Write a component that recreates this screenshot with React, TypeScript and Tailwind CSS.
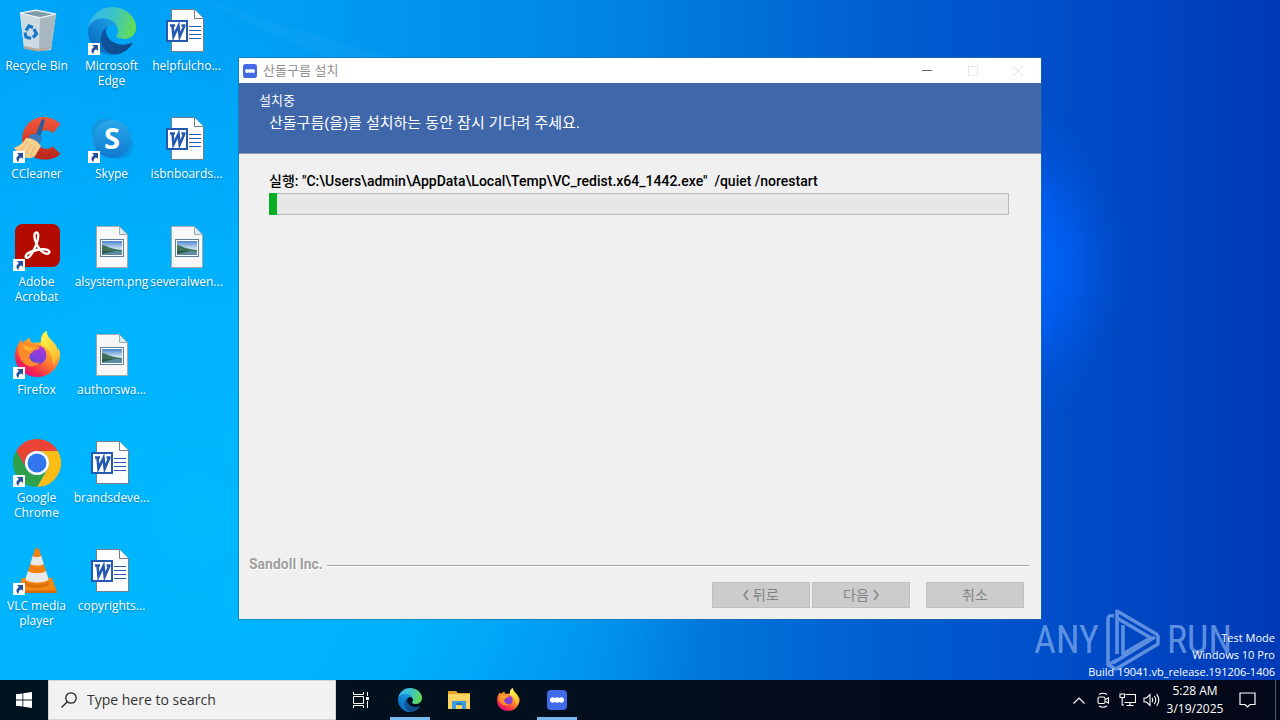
import type { ReactNode } from "react";

function EdgeIcon({ className }: { className: string }) {
  return (
    <svg viewBox="0 0 256 256" className={className}>
      <defs>
        <linearGradient id="edge-navy" x1="0.2" y1="0" x2="0.9" y2="0.8">
          <stop offset="0" stopColor="#0c59a4" />
          <stop offset="1" stopColor="#114a8b" />
        </linearGradient>
        <linearGradient id="edge-blue" x1="0.9" y1="0.2" x2="0.2" y2="1">
          <stop offset="0" stopColor="#1b9de2" />
          <stop offset="0.5" stopColor="#1383d2" />
          <stop offset="1" stopColor="#0666c0" />
        </linearGradient>
        <linearGradient id="edge-green" x1="0" y1="0.3" x2="1" y2="0.5">
          <stop offset="0" stopColor="#35b6ee" />
          <stop offset="0.5" stopColor="#3ac3c8" />
          <stop offset="1" stopColor="#66dc50" />
        </linearGradient>
      </defs>
      <path
        fill="url(#edge-navy)"
        d="M231 190.5c-3.4 1.8-6.9 3.4-10.5 4.7a101.5 101.5 0 0 1-35.9 6.4c-47.3 0-88.5-32.5-88.5-74.3a31.5 31.5 0 0 1 16.4-27.3c-42.8 1.8-53.8 46.4-53.8 72.5 0 73.9 68 81.3 82.7 81.3 7.9 0 19.8-2.3 27-4.6l1.3-.4a128.3 128.3 0 0 0 66.6-52.8 4 4 0 0 0-5.3-5.6z"
      />
      <path
        fill="url(#edge-blue)"
        d="M105.7 241.4a79.2 79.2 0 0 1-22.7-21.3 80.7 80.7 0 0 1 29.5-120c3.2-1.5 8.5-4.1 15.6-4a32.4 32.4 0 0 1 25.7 13 31.9 31.9 0 0 1 6.3 18.7c0-.2 24.5-79.6-80-79.6-43.9 0-80 41.6-80 78.2a130.2 130.2 0 0 0 12.1 56 128 128 0 0 0 156.4 67 75.5 75.5 0 0 1-62.8-8z"
      />
      <path
        fill="url(#edge-green)"
        d="M152.3 148.9c-.8 1-3.3 2.5-3.3 5.7 0 2.6 1.7 5.1 4.7 7.2 14.4 10 41.5 8.7 41.6 8.7 10.7 0 21.1-2.9 30.3-8.3A61.4 61.4 0 0 0 256 109.2c.3-22.4-8-37.3-11.3-43.9C223.5 23.9 177.7 0 128 0A128 128 0 0 0 0 126.2c.5-36.5 36.8-66 80-66 3.5 0 23.5.3 42 10.1 16.3 8.6 24.9 18.9 30.8 29.2 6.2 10.7 7.3 24.1 7.3 29.5s-2.7 13.3-7.8 19.9z"
      />
    </svg>
  );
}

function FirefoxIcon({ className }: { className: string }) {
  return (
    <svg viewBox="0 0 48 48" className={className}>
      <defs>
        <linearGradient id="fx-body" x1="0.85" y1="0.1" x2="0.25" y2="0.95">
          <stop offset="0" stopColor="#fff44f" />
          <stop offset="0.3" stopColor="#ffb32b" />
          <stop offset="0.6" stopColor="#ff6a33" />
          <stop offset="0.85" stopColor="#f5234f" />
          <stop offset="1" stopColor="#e01482" />
        </linearGradient>
        <linearGradient id="fx-globe" x1="0.7" y1="0" x2="0.3" y2="1">
          <stop offset="0" stopColor="#b433d8" />
          <stop offset="1" stopColor="#5b48d8" />
        </linearGradient>
        <linearGradient id="fx-flame" x1="0.5" y1="0" x2="0.8" y2="1">
          <stop offset="0" stopColor="#fff44f" />
          <stop offset="1" stopColor="#ffb52a" />
        </linearGradient>
      </defs>
      <path
        fill="url(#fx-body)"
        d="M6 12c.3-1.500 1.500-3 2.300-3.500 0 1.500.4 2.800 1.200 3.500C12 9 15 8.500 17 6.500c-.3 3 .8 4.800 3 5.500l8-1c-.5-5 1-8.500 5.500-11 .3 5.500 4 8 7 11.500 3 3 4 5.500 4.300 8.500.4-1 .5-2 .2-3.200C47 20 48 24 46 30c-3 10-12 16-21.500 16C12 46 2 37 2 25c0-5 1-9 4-13z"
      />
      <path fill="url(#fx-flame)" d="M28 14c-.5-6 1-11 5.500-14 .3 5.500 4 8 7 11.500 5 6 5 16 0 22-1-10-4-16-12.500-19.500z" />
      <circle cx="24" cy="24" r="9.500" fill="url(#fx-globe)" />
      <path
        fill="#ff8a2b"
        d="M6 12c4-1 8-.5 11 2 3-1 7 0 9 1.500 1.500 1.500 0 3-2 3.200-3 .3-4 1.200-4.500 3-2.500.5-4 3-2.500 6 1.500 3.500 6 5 10 3.500-4 6-14 5-18-1-4-6-5-13-3-18.200z"
      />
      <path fill="#ffc02c" d="M9.500 14c3 0 5 1 7 2.500 3-1 5-.5 7 0-3 .5-5.500 1.500-6 4-3 .5-6-2-8-6.500z" opacity="0.75" />
    </svg>
  );
}

function RecycleBinIcon() {
  return (
    <svg viewBox="0 0 48 48" className="size-12">
      <path fill="#cfdfe6" d="M7 6 23 3 43 7 38 43 26 44 11 41z" />
      <path fill="#a9bfc9" d="M7 6 23 3 43 7 27 11z" />
      <path fill="#7f9aa8" d="M10 6.500 23 4.500 39 7.300 27 9.800z" />
      <path fill="#cddbe2" d="M7 6 27 11 26 44 11 41z" />
      <path fill="#a8b8c1" d="M27 11 43 7 38 41 26 44z" />
      <path fill="#b5a79c" d="M11 39 26 42 38 39.500 37.500 42 26 44.500 11.500 42z" />
      <path fill="none" stroke="#f4f8fa" strokeWidth="1.200" d="M7 6 23 3 43 7 27 11z" />
      <g fill="none" stroke="#1678c8" strokeWidth="3.200">
        <path d="M13 23.500 16 19l4 1.500" />
        <path d="m21 22 2.500 5-3.500 3.500" />
        <path d="M18 31.500 13 30l-1-4.500" />
      </g>
    </svg>
  );
}

function CCleanerIcon() {
  return (
    <svg viewBox="0 0 48 48" className="size-12">
      <defs>
        <linearGradient id="cc-red" x1="0" y1="0" x2="0" y2="1">
          <stop offset="0" stopColor="#f2583a" />
          <stop offset="1" stopColor="#b8261c" />
        </linearGradient>
      </defs>
      <path
        fill="url(#cc-red)"
        d="M47.500 9 40 18c-3-3-8-4-12-1-5 3.500-6 9-2 13.500 4 4.500 10 4 14 1l7.500 7.500c-6 6-16 7-25 4C13 39 7 30 9.500 19.500 12 8 22 1 32 2c6 .3 11 3 15.500 7z"
      />
      <path fill="#225f9e" d="m29 4 3 1-6 21-5-2z" />
      <path fill="#3b78b5" d="M17 20c4-2 9-1 12 3l-3 8-12-5z" />
      <path fill="#f8cf8c" d="M13 23c6 0 12 3 15 8l-6 10c-2 2-7 3-10 1-6-1-8-6-11-9 5-2 9-5 12-10z" />
      <path fill="none" stroke="#e6b674" strokeWidth="1" d="M14 27 7 37m11-8-6 12m10-10-5 11" />
    </svg>
  );
}

function SkypeIcon() {
  return (
    <svg viewBox="0 0 48 48" className="size-12">
      <defs>
        <linearGradient id="skype" x1="0" y1="0" x2="0" y2="1">
          <stop offset="0" stopColor="#28a8ea" />
          <stop offset="1" stopColor="#0f79d0" />
        </linearGradient>
      </defs>
      <circle cx="17" cy="17" r="13.500" fill="#1596e0" />
      <circle cx="32" cy="31" r="13" fill="#0a94e6" />
      <circle cx="24" cy="24" r="19" fill="url(#skype)" />
      <text x="24" y="34" textAnchor="middle" fontSize="29" fontWeight="700" fill="#fff" fontFamily="Open Sans, sans-serif">
        S
      </text>
    </svg>
  );
}

function AcrobatIcon() {
  return (
    <svg viewBox="0 0 48 48" className="size-12">
      <rect x="2" y="1" width="45" height="43" rx="7.500" fill="#b30b00" />
      <path
        fill="none"
        stroke="#fff"
        strokeWidth="2.400"
        strokeLinejoin="round"
        d="M23.500 9.500c-3 0-2.500 6 0 11.500C21 27 17 34.500 14.500 34.800c-3.500.2-2-4.300 4-6.300 6-2 13-3 16.500-1.300 3.500 2 0 5.300-5 2C26.500 27 25 24 23.500 21c2-5.500 2.500-11.500 0-11.500z"
      />
    </svg>
  );
}

function ChromeIcon() {
  return (
    <svg viewBox="0 0 48 48" className="size-12">
      <path fill="#ea4335" d="M3.200 12a24 24 0 0 1 41.600 0H24a12 12 0 0 0-10.400 18z" />
      <path fill="#fbbc16" d="M44.800 12A24 24 0 0 1 24 48l10.400-18A12 12 0 0 0 24 12z" />
      <path fill="#2da14c" d="M24 48A24 24 0 0 1 3.200 12l10.400 18a12 12 0 0 0 20.800 0z" />
      <circle cx="24" cy="24" r="12" fill="#fff" />
      <circle cx="24" cy="24" r="9.500" fill="#3377ee" />
    </svg>
  );
}

function VlcIcon() {
  return (
    <svg viewBox="0 0 48 48" className="size-12">
      <path fill="#f28a12" d="M9 31h30l5 14H4z" />
      <path fill="#d9690a" d="M4 43.500h40V46H4z" />
      <path fill="#c85f0a" d="M13 32c0 5 22 5 22 0l1.500 5c-2 5-23 5-25 0z" opacity="0.6" />
      <path fill="#f4810f" d="M22 2c.8-1.300 3.200-1.300 4 0l10 32c-2 5-22 5-24 0z" />
      <path fill="#e8e8e8" d="m19.800 9-2.600 8c3 2 10.500 2 13.600 0l-2.600-8c-2 1.500-6.400 1.500-8.400 0z" />
      <path fill="#e8e8e8" d="m15 24-2.700 8.500c3.500 4 20 4 23.400 0L33 24c-4 3-14 3-18 0z" />
    </svg>
  );
}

function WordIcon() {
  return (
    <svg viewBox="0 0 48 48" className="size-12">
      <path fill="#fdfdfd" stroke="#6f7f8c" strokeWidth="1" d="M8.500 2.500h23l9 9v33h-32z" />
      <path fill="#fff" stroke="#6f7f8c" strokeWidth="1" d="M31.500 2.500v9h9" />
      <path stroke="#2b5fb4" strokeWidth="1" d="M26 19.500h12M26 23.500h12M26 27.500h12M26 31.500h12" />
      <rect x="4" y="14" width="20" height="20" fill="#fff" stroke="#2459b2" strokeWidth="2" />
      <path fill="none" stroke="#2459b2" strokeWidth="2.600" d="M7 18.500h5M9.500 18.500l1 11 5-10.500 1.200 10.500 4.800-11M18.500 18.500h4" />
    </svg>
  );
}

function ImageFileIcon() {
  return (
    <svg viewBox="0 0 48 48" className="size-12">
      <defs>
        <linearGradient id="photo-sky" x1="0" y1="0" x2="0" y2="1">
          <stop offset="0" stopColor="#4d86cf" />
          <stop offset="1" stopColor="#e3f0f6" />
        </linearGradient>
      </defs>
      <path fill="#f7f7f7" stroke="#9fa9b0" strokeWidth="1" d="M8.500 3.500h23l8 8v33h-31z" />
      <path fill="#d5ecf8" stroke="#9fa9b0" strokeWidth="1" d="M31.500 3.500v8h8z" />
      <rect x="12.500" y="16.500" width="23" height="17" fill="#fff" stroke="#5f7f9c" />
      <path fill="url(#photo-sky)" d="M14 18h20v9H14z" />
      <path fill="#3f7158" d="M14 22c4 0 7 4 20 5v1H14z" />
      <path fill="#5d8ba0" d="M14 28h20v4H14z" />
      <path fill="#2f5749" d="M14 28h13l-13 3z" />
    </svg>
  );
}

function SandollIcon({ className }: { className: string }) {
  return (
    <svg viewBox="0 0 20 20" className={className}>
      <rect width="20" height="20" rx="4" fill="#4169e8" />
      <g fill="#fff">
        <circle cx="5.700" cy="10" r="2.700" />
        <circle cx="10" cy="10" r="2.700" />
        <circle cx="14.300" cy="10" r="2.700" />
      </g>
    </svg>
  );
}

function ExplorerIcon() {
  return (
    <svg viewBox="0 0 24 24" className="size-6">
      <path fill="#e5a02c" d="M1 3h8l2 2h12v4H1z" />
      <path fill="#fcd462" d="M1 6h22v15H1z" />
      <path fill="#3c9bdc" d="M5 13h14v8h-4v-4H9v4H5z" />
      <path fill="#2478b8" d="M9 15h6v2H9z" />
    </svg>
  );
}

function ShortcutArrow() {
  return (
    <svg viewBox="0 0 12 12" className="absolute bottom-0 left-0 size-3">
      <path fill="#fff" d="M0 0h12v12H0z" />
      <path fill="#25509a" d="M4 2h6v6L8 6.200C6 7.500 5.500 8.500 5.500 11 2.500 9 3 6 6 4z" />
    </svg>
  );
}

type DesktopItem = { label: string; icon: ReactNode; shortcut?: boolean };

// filled column by column, six rows per column
const items: DesktopItem[] = [
  { label: "Recycle Bin", icon: <RecycleBinIcon /> },
  { label: "CCleaner", icon: <CCleanerIcon />, shortcut: true },
  { label: "Adobe Acrobat", icon: <AcrobatIcon />, shortcut: true },
  { label: "Firefox", icon: <FirefoxIcon className="size-12" />, shortcut: true },
  { label: "Google Chrome", icon: <ChromeIcon />, shortcut: true },
  { label: "VLC media player", icon: <VlcIcon />, shortcut: true },
  { label: "Microsoft Edge", icon: <EdgeIcon className="size-12" />, shortcut: true },
  { label: "Skype", icon: <SkypeIcon />, shortcut: true },
  { label: "alsystem.png", icon: <ImageFileIcon /> },
  { label: "authorswa...", icon: <ImageFileIcon /> },
  { label: "brandsdeve...", icon: <WordIcon /> },
  { label: "copyrights...", icon: <WordIcon /> },
  { label: "helpfulcho...", icon: <WordIcon /> },
  { label: "isbnboards...", icon: <WordIcon /> },
  { label: "severalwen...", icon: <ImageFileIcon /> },
];

function DesktopIcons() {
  return (
    <div className="-ml-px grid w-max grid-flow-col grid-rows-[repeat(6,108px)] auto-cols-[75px]">
      {items.map((item) => (
        <button key={item.label} type="button" className="flex flex-col items-center pt-[7px]">
          <span className="relative">
            {item.icon}
            {item.shortcut && <ShortcutArrow />}
          </span>
          <span className="mt-[3px] text-xs leading-[15px] text-white [text-shadow:0_1px_2px_#00000055]">
            {item.label}
          </span>
        </button>
      ))}
    </div>
  );
}

function Wallpaper() {
  return (
    <svg viewBox="0 0 1280 720" preserveAspectRatio="none" className="absolute inset-0 size-full">
      <defs>
        <linearGradient id="wall-base">
          <stop offset="0" stopColor="#00a6f8" />
          <stop offset="0.200" stopColor="#00a0f5" />
          <stop offset="0.480" stopColor="#0084e4" />
          <stop offset="0.650" stopColor="#0064d2" />
          <stop offset="0.810" stopColor="#004fca" />
          <stop offset="1" stopColor="#003ab6" />
        </linearGradient>
        <radialGradient id="wall-glow">
          <stop offset="0" stopColor="#0068ff" />
          <stop offset="0.450" stopColor="#0060f5" stopOpacity="0.700" />
          <stop offset="1" stopColor="#0050d0" stopOpacity="0" />
        </radialGradient>
        <radialGradient id="wall-left">
          <stop offset="0" stopColor="#00b9ff" />
          <stop offset="0.500" stopColor="#00b6ff" stopOpacity="0.800" />
          <stop offset="1" stopColor="#00b0ff" stopOpacity="0" />
        </radialGradient>
      </defs>
      <path fill="url(#wall-base)" d="M0 0h1280v720H0z" />
      <ellipse cx="200" cy="520" rx="520" ry="500" fill="url(#wall-left)" />
      <ellipse cx="1030" cy="265" rx="100" ry="160" fill="url(#wall-glow)" />
      <path fill="#fff" opacity="0.030" d="M200 0 400 60H330z" />
    </svg>
  );
}

function Watermark() {
  return (
    <div className="absolute right-12 bottom-2 flex items-center gap-1.5 font-['Roboto_Condensed','Liberation_Sans_Narrow',sans-serif] text-[38px] leading-none font-normal text-[#9cc0f5] opacity-60">
      <span>ANY</span>
      <svg viewBox="0 0 56 64" className="h-16 w-14 fill-none stroke-current" strokeWidth="3.500" strokeLinejoin="round">
        <path d="M9 8c-4-1-6 0-6 3v46l9-5" />
        <path d="M12 46V3l41 24" />
        <path d="M12 10l34 20M18 17v29l29-17" />
        <path d="M53 27v9L11 61l-8-4M50 29 8 55" />
      </svg>
      <span>RUN</span>
    </div>
  );
}

function InstallerWindow() {
  const progress = 1.1;

  return (
    <section className="absolute top-[58px] right-[239px] bottom-[61px] left-[239px] flex flex-col bg-[#f0f0f0] font-['Liberation_Sans','Noto_Sans_CJK_KR',sans-serif] outline-1 outline-[#1a6ba8]/60">
      <div className="flex h-[25px] shrink-0 items-center bg-white pl-1 text-[#8f8f8f]">
        <SandollIcon className="size-[14px]" />
        <h1 className="ml-1.5 text-[13px] leading-4">산돌구름 설치</h1>
        <div className="ml-auto flex h-full">
          <button type="button" aria-label="Minimize" className="grid w-[46px] place-items-center">
            <span className="h-px w-2.5 bg-[#666]" />
          </button>
          <button type="button" aria-label="Maximize" disabled className="grid w-[45px] place-items-center">
            <span className="size-2.5 border border-[#e8e8e8]" />
          </button>
          <button type="button" aria-label="Close" disabled className="grid w-[46px] place-items-center">
            <svg viewBox="0 0 10 10" className="size-2.5 stroke-[#e0e0e0]">
              <path d="m0 0 10 10M10 0 0 10" />
            </svg>
          </button>
        </div>
      </div>

      <header className="h-[71px] shrink-0 border-b border-[#8c99ae] bg-[#3f67aa] pt-2 pl-5 text-white">
        <h2 className="text-[13px] leading-5">설치중</h2>
        <p className="pl-2.5 text-[15px] leading-6">산돌구름(을)를 설치하는 동안 잠시 기다려 주세요.</p>
      </header>

      <div className="flex-1 pt-[17px] pr-8 pl-[30px]">
        <p
          id="status"
          className="font-['Roboto','Noto_Sans_CJK_KR',sans-serif] text-sm leading-5 font-medium whitespace-pre text-black"
        >
          {'실행: "C:\\Users\\admin\\AppData\\Local\\Temp\\VC_redist.x64_1442.exe"  /quiet /norestart'}
        </p>
        <div
          role="progressbar"
          aria-labelledby="status"
          aria-valuenow={progress}
          className="mt-0.5 h-[22px] bg-[#e6e6e6] shadow-[inset_0_0_0_1px_#bcbcbc]"
        >
          <div className="h-full bg-[#06b025]" style={{ width: `${progress}%` }} />
        </div>
      </div>

      <footer className="pr-3 pb-[11px] pl-2.5">
        <div className="flex items-center gap-1">
          <span className="font-['Roboto',sans-serif] text-sm leading-5 font-bold text-[#a0a0a0] [text-shadow:1px_1px_0_#fff]">
            Sandoll Inc.
          </span>
          <span className="mt-1 h-0.5 flex-1 border-t border-[#a0a0a0] bg-white" />
        </div>
        <div className="mt-2 flex justify-end gap-0.5 pr-[5px] text-sm text-[#838383]">
          <button type="button" disabled className="flex h-[26px] w-[98px] items-center justify-center gap-1 border border-[#bfbfbf] bg-[#ccc]">
            <Chevron d="M5 1 1 6l4 5" />
            뒤로
          </button>
          <button type="button" disabled className="flex h-[26px] w-[98px] items-center justify-center gap-1 border border-[#bfbfbf] bg-[#ccc]">
            다음
            <Chevron d="m1 1 4 5-4 5" />
          </button>
          <button type="button" disabled className="ml-3.5 h-[26px] w-[98px] border border-[#bfbfbf] bg-[#ccc]">
            취소
          </button>
        </div>
      </footer>
    </section>
  );
}

function Chevron({ d }: { d: string }) {
  return (
    <svg viewBox="0 0 6 12" className="h-3 w-1.5 fill-none stroke-current" strokeWidth="1.500">
      <path d={d} />
    </svg>
  );
}

function TaskbarApp({ label, open, children }: { label: string; open?: boolean; children: ReactNode }) {
  return (
    <button type="button" aria-label={label} className="relative grid w-[49px] place-items-center">
      {children}
      {open && <span className="absolute bottom-0 h-[3px] w-10 bg-[#76b9ed]" />}
    </button>
  );
}

function Taskbar() {
  return (
    <div className="relative flex h-10 shrink-0 bg-linear-to-r from-[#00141f] to-[#040818] text-white">
      <button type="button" aria-label="Start" className="grid w-12 place-items-center">
        <svg viewBox="0 0 16 16" className="size-4 fill-white">
          <path d="M0 2.300 6.500 1.400v6.200H0zM7.300 1.300 16 0v7.600H7.300zM0 8.400h6.500v6.200L0 13.700zM7.300 8.400H16V16l-8.700-1.300z" />
        </svg>
      </button>
      <label className="flex w-72 items-center gap-2.5 border border-[#d0d4d6] bg-[#f2f2f2] pl-3">
        <svg viewBox="0 0 16 16" className="size-4 shrink-0 fill-none stroke-[#222]" strokeWidth="1.300">
          <circle cx="10" cy="6" r="5.200" />
          <path d="M6.300 9.700.500 15.500" />
        </svg>
        <input
          type="text"
          aria-label="Search"
          placeholder="Type here to search"
          className="w-full bg-transparent text-sm outline-none placeholder:text-[#333]"
        />
      </label>
      <TaskbarApp label="Task View">
        <svg viewBox="0 0 18 18" className="size-[18px] fill-none stroke-white">
          <path d="M1.500 1v2.500h10V1M1.500 17v-2.500h10V17M1.500 5.500h10v7h-10zM15.500 1v4M15.500 10v7" />
          <path fill="#fff" stroke="none" d="M14 6h3v3h-3z" />
        </svg>
      </TaskbarApp>
      <TaskbarApp label="Microsoft Edge" open>
        <EdgeIcon className="size-6" />
      </TaskbarApp>
      <TaskbarApp label="File Explorer">
        <ExplorerIcon />
      </TaskbarApp>
      <TaskbarApp label="Firefox">
        <FirefoxIcon className="size-6" />
      </TaskbarApp>
      <TaskbarApp label="산돌구름" open>
        <SandollIcon className="size-5" />
      </TaskbarApp>

      <div className="ml-auto flex items-center">
        <button type="button" aria-label="Show hidden icons" className="grid w-6 place-items-center">
          <svg viewBox="0 0 12 7" className="h-[7px] w-3 fill-none stroke-white" strokeWidth="1.200">
            <path d="m.500 6.500 5.500-5.500 5.500 5.500" />
          </svg>
        </button>
        <button type="button" aria-label="Meet Now" className="grid w-6 place-items-center">
          <svg viewBox="0 0 16 16" className="size-4 fill-none stroke-white" strokeWidth="1.100">
            <rect x="3" y="5" width="7" height="6.500" rx="1.500" />
            <path d="m10.500 7.500 3-1.500v5l-3-1.500M4 2.500q4-2.500 8 0M4 14q4 2.500 8 0" />
          </svg>
        </button>
        <button type="button" aria-label="Network" className="grid w-6 place-items-center">
          <svg viewBox="0 0 17 16" className="h-4 w-[17px] fill-none stroke-white" strokeWidth="1.100">
            <path d="M6.500 2.500h10v8h-11M11 10.500v3M7.500 13.500h7M1 2h4.500v3.500H1zM3.200 5.500v7.500H5" />
          </svg>
        </button>
        <button type="button" aria-label="Volume" className="grid w-6 place-items-center">
          <svg viewBox="0 0 17 16" className="h-4 w-[17px] fill-none stroke-white" strokeWidth="1.100">
            <path d="M1 6h2.500L7 2.500v11L3.500 10H1zM9 5.800q1.500 2.200 0 4.400M11.300 4q3 4 0 8M13.600 2.200q4.500 5.800 0 11.600" />
          </svg>
        </button>
        <button type="button" className="w-16 text-center text-xs leading-[18px]">
          5:28 AM
          <br />
          3/19/2025
        </button>
        <button type="button" aria-label="Notifications" className="grid w-10 place-items-center">
          <svg viewBox="0 0 17 16" className="h-4 w-[17px] fill-none stroke-white" strokeWidth="1.200">
            <path d="M1 1h15v11.500h-5L8.500 15 6 12.500H1z" />
          </svg>
        </button>
        <button type="button" aria-label="Show desktop" className="ml-2 h-10 w-[5px] border-l border-[#50606e]" />
      </div>
    </div>
  );
}

export default function App() {
  return (
    <main className="relative flex min-h-screen flex-col overflow-hidden bg-[#0078d7] font-['Open_Sans','Noto_Sans_CJK_KR',sans-serif]">
      <Wallpaper />
      <div className="relative flex-1">
        <DesktopIcons />
        <InstallerWindow />
        <Watermark />
        <div className="absolute right-[5px] bottom-0 text-right text-[11px] leading-[17px] text-white">
          <p>Test Mode</p>
          <p>Windows 10 Pro</p>
          <p>Build 19041.vb_release.191206-1406</p>
        </div>
      </div>
      <Taskbar />
    </main>
  );
}
